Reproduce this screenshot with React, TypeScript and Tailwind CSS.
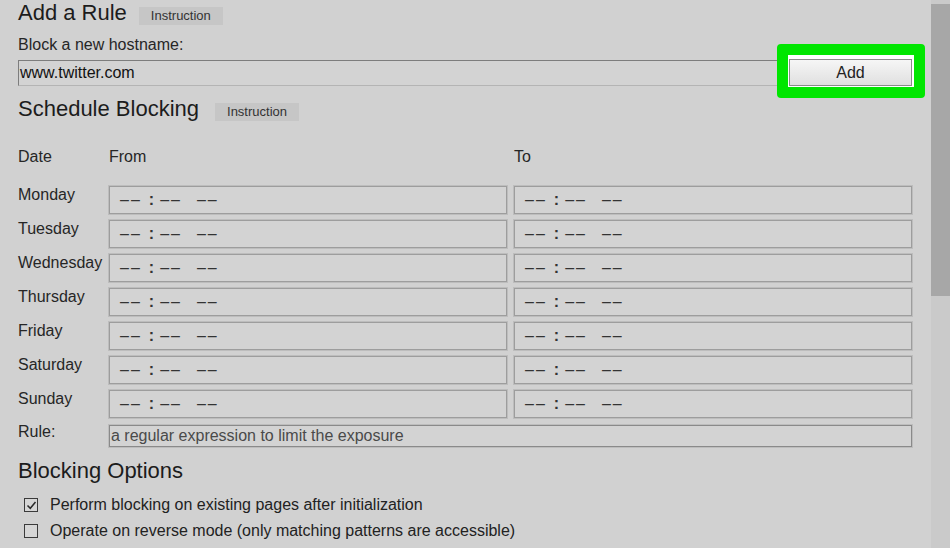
import React from 'react';

const days = ['Monday', 'Tuesday', 'Wednesday', 'Thursday', 'Friday', 'Saturday', 'Sunday'];

const boxCls =
  'h-[28px] flex items-center pl-[10px] border border-[#9d9d9d] shadow-[0_0_0_1px_#bdbdbd] bg-[#d3d3d3] text-[16px] text-[#333] whitespace-pre';

const TimeBox = () => (
  <div className={boxCls}>
    <span className="tracking-[2px]">––</span>
    <span className="ml-[7px] font-bold">:</span>
    <span className="ml-[6px] tracking-[2px]">––</span>
    <span className="ml-[15px] tracking-[2px]">––</span>
  </div>
);

const Badge = ({ className = '' }: { className?: string }) => (
  <span className={`h-[18px] px-[12px] flex items-center bg-[#c6c6c6] text-[13px] text-[#333] ${className}`}>
    Instruction
  </span>
);

const Checkbox = ({ checked }: { checked?: boolean }) => (
  <span className="ml-[6px] w-[14px] h-[14px] border-[1.5px] border-[#3a3a3a] bg-[#d6d6d6] flex items-center justify-center">
    {checked && (
      <svg width="11" height="11" viewBox="0 0 11 11" fill="none">
        <path d="M1.5 5.5 L4.3 8.3 L9.5 2" stroke="#2a2a2a" strokeWidth="1.5" />
      </svg>
    )}
  </span>
);

const CheckRow = ({ checked, label }: { checked?: boolean; label: string }) => (
  <div className="flex items-center h-[18px]">
    <Checkbox checked={checked} />
    <span className="ml-[12px] text-[16px] text-[#222] whitespace-nowrap">{label}</span>
  </div>
);

export default function App() {
  return (
    <div className="flex w-[950px] h-[548px] overflow-hidden bg-[#d1d1d1] font-['Liberation_Sans',Arial,sans-serif] text-[#222]">
      <div className="flex-1 flex flex-col pl-[18px] pr-[19px]">
        {/* Add a Rule */}
        <div className="flex items-start h-[25px]">
          <h1 className="text-[22px] leading-[25px] text-[#1c1c1c]">Add a Rule</h1>
          <Badge className="ml-[12px] mt-[7px]" />
        </div>

        <div className="mt-[11px] text-[16px] leading-[18px] text-[#262626]">Block a new hostname:</div>

        <div className="mt-[5px] flex items-center h-[27px] gap-[3px]">
          <div className="flex-1 h-[26px] flex items-center pl-[1px] border border-t-[#7d7d7d] border-l-[#7d7d7d] border-b-[#b4b4b4] border-r-[#b4b4b4] bg-[#d3d3d3] text-[16px] text-[#111]">
            www.twitter.com
          </div>
          <div className="relative w-[123px] h-[27px]">
            <span className="absolute -left-[12px] -right-[13px] -top-[15px] -bottom-[12px] rounded-[4px] border-[11px] border-[#00e600] bg-white pointer-events-none" />
            <button className="relative w-full h-full border border-[#8a8a8a] bg-gradient-to-b from-[#f6f6f6] to-[#e0e0e0] text-[16px] text-[#222]">
              Add
            </button>
          </div>
        </div>

        {/* Schedule */}
        <div className="mt-[10px] flex items-start h-[25px]">
          <h2 className="text-[22px] leading-[25px] text-[#1c1c1c]">Schedule Blocking</h2>
          <Badge className="ml-[16px] mt-[7px]" />
        </div>

        <div className="mt-[27px] grid grid-cols-[84px_1fr_1fr] gap-x-[7px] text-[16px] leading-[18px] text-[#262626]">
          <span>Date</span>
          <span>From</span>
          <span>To</span>
        </div>

        <div className="mt-[20px] grid grid-cols-[84px_1fr_1fr] gap-x-[7px] gap-y-[6px]">
          {days.map((d) => (
            <React.Fragment key={d}>
              <span className="text-[16px] leading-[18px] text-[#262626] whitespace-nowrap">{d}</span>
              <TimeBox />
              <TimeBox />
            </React.Fragment>
          ))}
        </div>

        <div className="mt-[7px] grid grid-cols-[84px_1fr] gap-x-[7px]">
          <span className="text-[16px] leading-[18px] text-[#262626] -mt-[2px]">Rule:</span>
          <div className="h-[22px] flex items-center pl-[1px] border border-[#8a8a8a] shadow-[0_0_0_1px_#bdbdbd] bg-[#d3d3d3] text-[16px] text-[#4a4a4a]">
            a regular expression to limit the exposure
          </div>
        </div>

        {/* Blocking options */}
        <h2 className="mt-[11px] text-[22px] leading-[25px] text-[#1c1c1c]">Blocking Options</h2>

        <div className="mt-[13px] flex flex-col gap-[8px]">
          <CheckRow checked label="Perform blocking on existing pages after initialization" />
          <CheckRow label="Operate on reverse mode (only matching patterns are accessible)" />
          <div className="flex items-center h-[18px]">
            <Checkbox />
          </div>
        </div>
      </div>

      {/* scrollbar */}
      <div className="w-[19px] h-full bg-[#cacaca] pt-[4px]">
        <div className="h-[292px] bg-[#a7a7a7]" />
      </div>
    </div>
  );
}
